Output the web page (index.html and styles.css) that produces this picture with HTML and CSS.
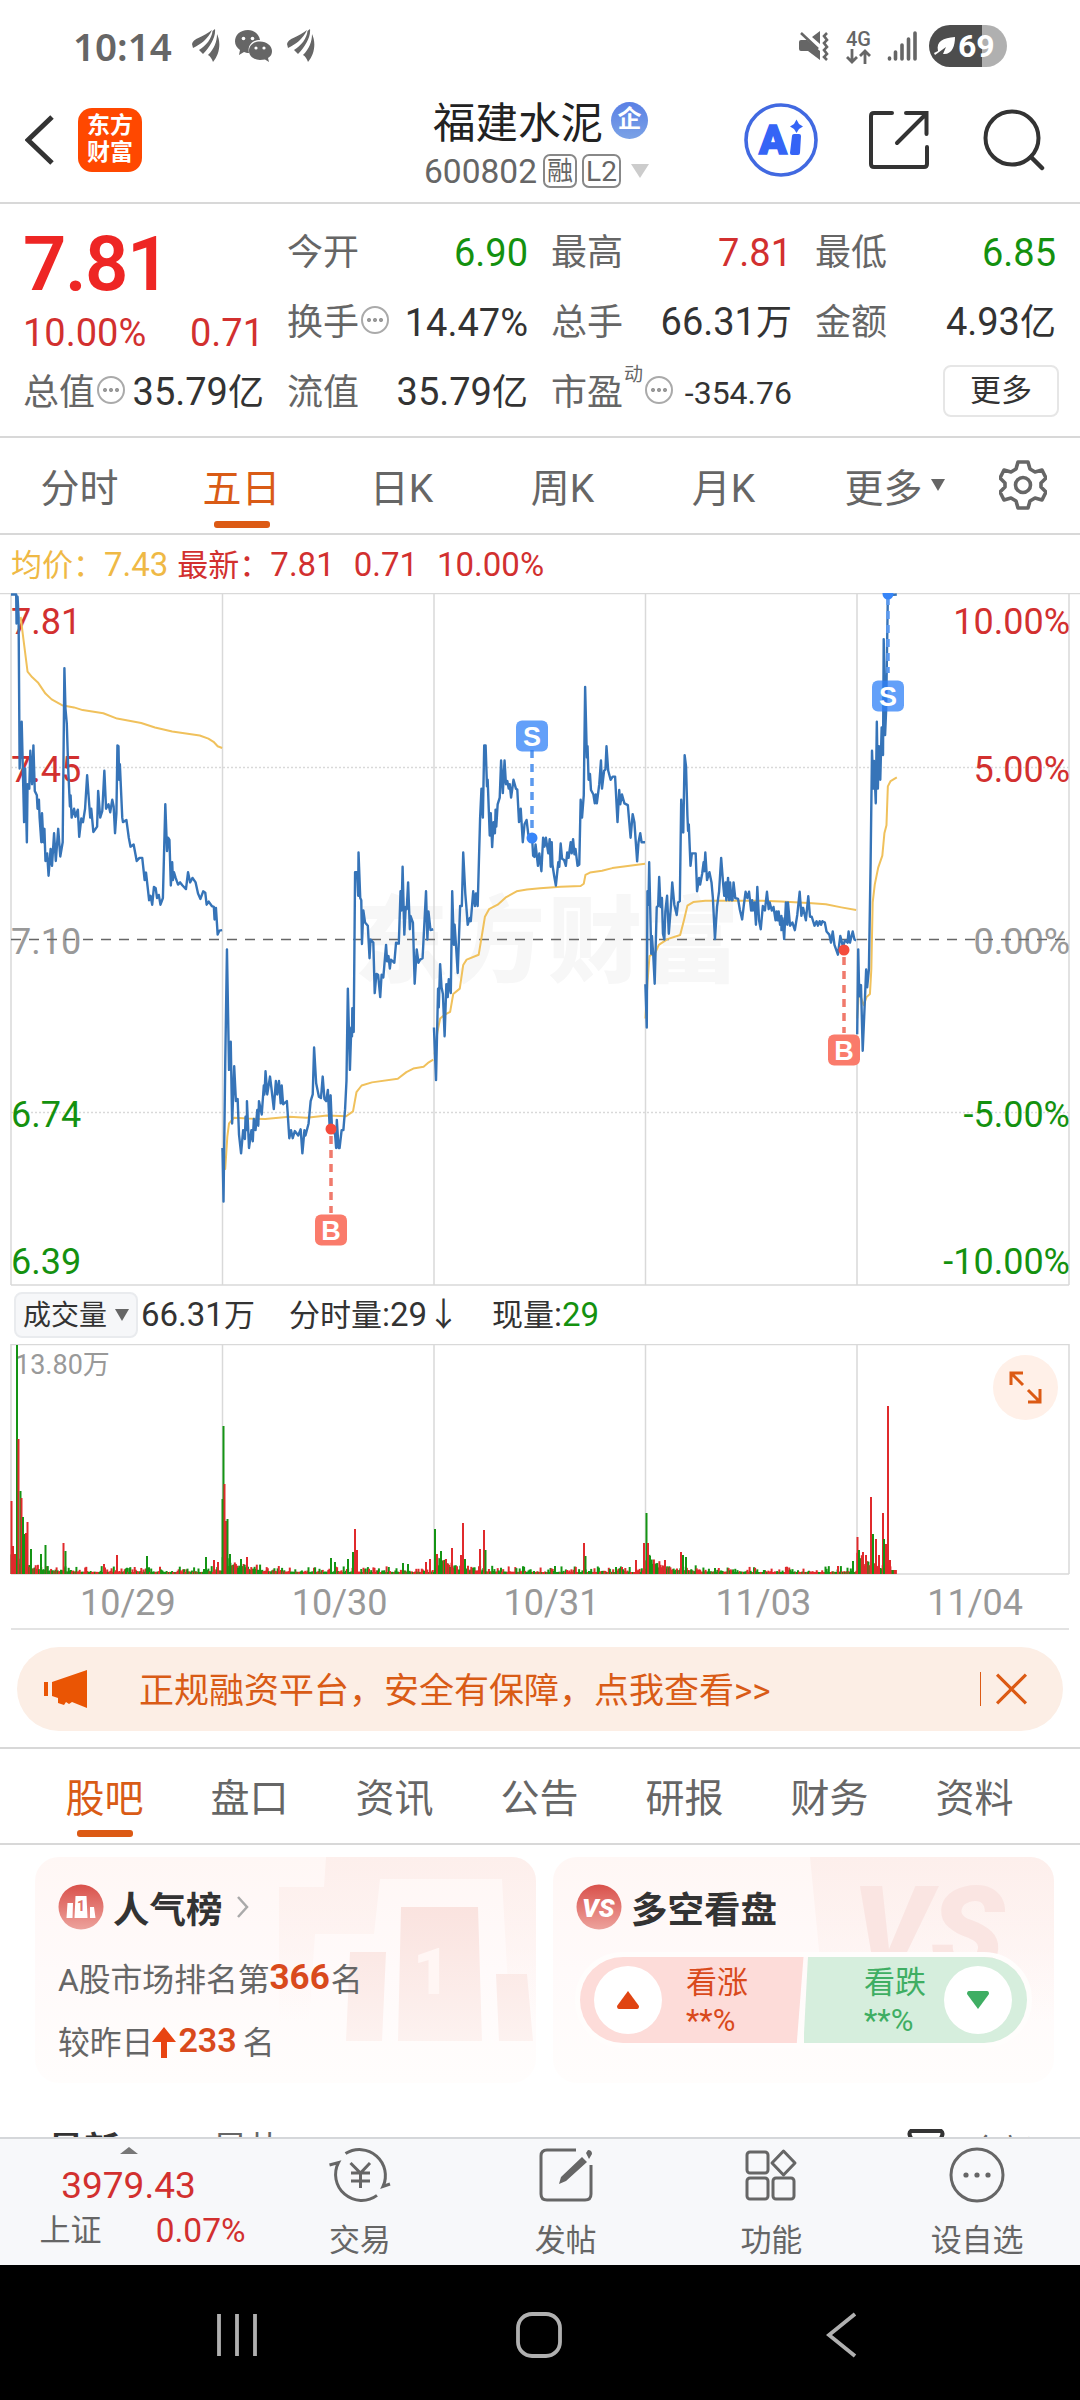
FILE: index.html
```html
<!DOCTYPE html>
<html lang="zh-CN">
<head>
  <meta charset="UTF-8">
  <meta name="viewport" content="width=device-width, initial-scale=1">
  <title>福建水泥 600802</title>
  <link rel="stylesheet" href="styles.css">
</head>
<body>
  <!-- Phone status bar -->
  <div class="status-bar">
    <div class="status-left">
      <span class="clock">10:14</span>
      <svg class="wing" width="28" height="34" viewBox="0 0 28 34"><path d="M0 15C1 9 12 8 20 1C16 10 9 15 1 19ZM7 21C14 17 20 9 20.500 2L23 0C24 8 18 18 11 25ZM25 5C29 13 28 25 21 33C20 30 18 27 16 26C22 20 25 13 25 5Z"/></svg>
      <svg class="wechat" width="37" height="32" viewBox="0 0 37 32"><path d="M13 0C5 0 0 5 0 11.500C0 15 2 18 5 20L4 25L9 22C10 22.500 12 23 14 23C12 15 18 10 25 10C24 4 19 0 13 0Z"/><path d="M25 11.500C18 11.500 14 16 14 21C14 26 19 30 25 30L30 29.500L34 32L33 28C36 26 37 24 37 21C37 16 32 11.500 25 11.500Z"/><g fill="#fff"><circle cx="8.500" cy="8.500" r="1.800"/><circle cx="17.500" cy="8.500" r="1.800"/><circle cx="21" cy="18" r="1.600"/><circle cx="29" cy="18" r="1.600"/></g></svg>
      <svg class="wing" width="28" height="34" viewBox="0 0 28 34"><path d="M0 15C1 9 12 8 20 1C16 10 9 15 1 19ZM7 21C14 17 20 9 20.500 2L23 0C24 8 18 18 11 25ZM25 5C29 13 28 25 21 33C20 30 18 27 16 26C22 20 25 13 25 5Z"/></svg>
    </div>
    <div class="status-right">
      <svg width="30" height="30" viewBox="0 0 30 30"><path d="M0 11Q0 9 2 9H8L21 20V29L9 20H2Q0 20 0 18ZM13 6L21 0V13Z"/><path d="M2 2L19 18M28 2L25 5L28 9L25 12L28 16L25 19L28 23L25 26L28 29" fill="none" stroke="#666" stroke-width="2.600"/></svg>
      <div class="net">
        <span>4G</span>
        <svg width="25" height="15" viewBox="0 0 25 15"><path d="M6 0V13M1 8L6 13L11 8M19 15V2M14 7L19 2L24 7" fill="none" stroke="#666" stroke-width="2.800"/></svg>
      </div>
      <svg width="30" height="30" viewBox="0 0 30 30"><path d="M2.500 27V28M8.500 21V28M15 14V28M21.500 8V28M28 2V28" fill="none" stroke="#666" stroke-width="3.600" stroke-linecap="round"/></svg>
      <div class="battery">
        <svg width="21" height="20" viewBox="0 0 21 20"><path d="M4 15C2 5 9 2 21 1C21 10 18 19 9 18L12 11L1 19L0 17Z" fill="#fff"/></svg>
        <span>69</span>
      </div>
    </div>
  </div>

  <header class="header">
    <div class="header-left">
      <svg width="30" height="52" viewBox="0 0 30 52"><path d="M27 3L3 26L27 49" fill="none" stroke="#333" stroke-width="5"/></svg>
      <div class="logo">东方<br>财富</div>
    </div>
    <div class="header-title">
      <div class="stock-name">福建水泥<span class="company">企</span></div>
      <div class="stock-code">600802<span class="tag">融</span><span class="tag tag-l2">L2</span><i class="down-light"></i></div>
    </div>
    <div class="header-right">
      <svg width="74" height="74" viewBox="0 0 74 74"><circle cx="37" cy="37" r="35" fill="none" stroke="#4169e1" stroke-width="3.600"/><text class="ai-text" x="15" y="51">A</text><path d="M50 33H55L54 50H48Z" fill="#3564f6" stroke="#3564f6" stroke-width="4" stroke-linejoin="round"/><path d="M52.500 16.500L55 21L59 23.500L55 26L52.500 30L50 26L46 23.500L50 21Z" fill="#3564f6"/></svg>
      <svg width="60" height="60" viewBox="0 0 60 60"><path d="M23 3H5Q2 3 2 6V54Q2 57 5 57H55Q58 57 58 54V37M37 3H57.500V24M57 4L28 33" fill="none" stroke="#333" stroke-width="4" stroke-linecap="round"/></svg>
      <svg width="62" height="62" viewBox="0 0 62 62"><circle cx="29" cy="29" r="26.500" fill="none" stroke="#333" stroke-width="4"/><path d="M48 48L59 59" stroke="#333" stroke-width="4.500" stroke-linecap="round"/></svg>
    </div>
  </header>

  <section class="quote">
    <div class="price">7.81</div>
    <div class="cell"><label>今开</label><b class="green">6.90</b></div>
    <div class="cell"><label>最高</label><b class="red">7.81</b></div>
    <div class="cell"><label>最低</label><b class="green">6.85</b></div>

    <div class="cell change red"><span>10.00%</span><span>0.71</span></div>
    <div class="cell"><label>换手<i class="info"></i></label><b>14.47%</b></div>
    <div class="cell"><label>总手</label><b>66.31<small>万</small></b></div>
    <div class="cell"><label>金额</label><b>4.93<small>亿</small></b></div>

    <div class="cell"><label>总值<i class="info"></i></label><b>35.79<small>亿</small></b></div>
    <div class="cell"><label>流值</label><b>35.79<small>亿</small></b></div>
    <div class="cell"><label>市盈<sup>动</sup><i class="info"></i></label><b class="pe">-354.76</b></div>
    <div class="cell cell-more"><button class="more-btn">更多</button></div>
  </section>

  <nav class="period-tabs">
    <a>分时</a>
    <a class="active">五日</a>
    <a>日K</a>
    <a>周K</a>
    <a>月K</a>
    <a class="more-tab">更多<i class="down-dark"></i></a>
    <svg width="48" height="50" viewBox="0 0 48 50"><path d="M19 2H29L31 9L36 12L43 10L47 18L42 23V27L47 32L43 40L36 38L31 41L29 48H19L17 41L12 38L5 40L1 32L6 27V23L1 18L5 10L12 12L17 9Z" fill="none" stroke="#666" stroke-width="3.600" stroke-linejoin="round"/><circle cx="24" cy="25" r="7.500" fill="none" stroke="#666" stroke-width="3.600"/></svg>
  </nav>

  <div class="average-line">
    <span class="yellow"><small>均价：</small>7.43</span>
    <span class="red"><small>最新：</small>7.81</span>
    <span class="red">0.71</span>
    <span class="red">10.00%</span>
  </div>

  <!-- Price chart -->
  <svg class="price-chart" width="1080" height="693" viewBox="0 0 1080 693">
    <text class="watermark" x="354" y="382">东方财富</text>
    <g class="frame">
      <path d="M0 .5H1080M11 692H1069" />
      <path d="M11 0V692M222.500 0V692M434 0V692M645.500 0V692M857 0V692M1069 0V692"/>
      <path class="dotted" d="M11 174.500H1069M11 519.500H1069"/>
    </g>
    <g class="labels">
      <text class="red-fill" x="11" y="41">7.81</text>
      <text class="red-fill" x="11" y="189">7.45</text>
      <text class="grey-fill" x="11" y="361">7.10</text>
      <text class="green-fill" x="11" y="534">6.74</text>
      <text class="green-fill" x="11" y="681">6.39</text>
    </g>
    <g class="labels labels-right">
      <text class="red-fill" x="1070" y="41">10.00%</text>
      <text class="red-fill" x="1070" y="189">5.00%</text>
      <text class="grey-fill" x="1070" y="361">0.00%</text>
      <text class="green-fill" x="1070" y="534">-5.00%</text>
      <text class="green-fill" x="1070" y="681">-10.00%</text>
    </g>
    <path class="zero-line" d="M11 346.500H1069"/>
    <g class="avg" transform="translate(0 -3) scale(.3444 .4464)">
      <polyline points="60,60 68,110 80,183 93,195 110,207 132,232 150,245 180,258 215,263 240,269 300,276 340,288 410,298 450,308 500,317 580,326 605,333 620,340 632,350 645,354"/>
      <polyline points="646,1250 654,1297 660,1225 665,1195 680,1182 720,1184 770,1185 840,1180 890,1182 950,1177 1005,1179 1025,1168 1035,1125 1050,1110 1080,1103 1155,1095 1180,1080 1200,1072 1230,1068 1245,1058 1258,1052"/>
      <polyline points="1262,1040 1270,990 1278,960 1290,952 1307,945 1316,905 1335,893 1345,840 1355,828 1390,817 1400,770 1408,732 1420,715 1445,705 1470,688 1500,675 1530,671 1568,668 1628,665 1686,663 1695,658 1700,638 1713,633 1748,629 1778,623 1873,613"/>
    </g>
    <g class="avg" transform="translate(540 -3) scale(.3444 .4464)">
      <polyline points="306,960 312,880 318,820 335,812 345,795 370,782 407,773 418,740 428,707 445,699 480,696 640,696 700,698 780,701 830,704 875,711 918,717"/>
      <polyline points="921,960 926,900 940,930 948,912 958,905 962,850 966,700 972,660 982,622 994,595 1000,545 1006,527 1010,440 1018,428 1036,420"/>
    </g>
    <g class="price-line" transform="translate(0 -3) scale(.3444 .4464)">
      <polyline points="32,10 47,10 48,75 51,15 54,60 57,400 63,295 70,520 73,400 78,565 80,435 85,445 88,360 93,435 97,348 101,450 107,460 109,490 113,470 115,510 120,565 122,500 126,565 129,535 132,607 137,590 141,640 147,580 151,618 157,545 162,607 169,535 175,597 182,565 187,175 190,265 194,300 198,400 203,485 205,460 208,510 215,490 219,508 226,492 230,553 236,512 241,520 247,490 253,415 259,480 262,510 265,490 271,542 282,530 285,450 291,510 297,495 303,405 308,490 315,480 320,498 326,470 330,485 334,545 338,500 341,348 344,350 346,425 348,390 355,510 357,520 367,515 374,555 379,575 388,570 397,607 405,600 413,600 420,650 424,633 433,695 437,685 442,705 447,665 452,668 456,690 461,683 466,705 473,690 480,480 485,585 488,555 492,560 496,662 500,610 502,650 505,632 510,645 517,660 523,655 530,662 540,670 546,632 552,655 559,645 568,655 575,680 582,692 590,675 596,678 600,705 606,698 615,708 621,710 623,738 627,712 632,772 637,763 645,762"/>
      <polyline points="646,1250 649,1370 654,1060 659,805 665,1075 670,1012 674,1195 680,1067 685,1145 690,1140 694,1220 700,1262 706,1210 711,1230 713,1180 717,1210 717,1145 723,1250 730,1210 734,1235 737,1185 742,1210 747,1165 750,1200 752,1145 760,1175 766,1110 768,1130 771,1078 776,1130 784,1090 788,1115 795,1163 801,1100 805,1130 810,1100 815,1150 818,1110 822,1152 833,1145 840,1228 845,1210 850,1228 856,1212 866,1222 873,1208 878,1262 884,1210 887,1222 896,1195 902,1145 908,1130 912,1025 918,1105 926,1135 932,1138 937,1090 942,1140 947,1145 952,1120 957,1200 960,1132 964,1208 973,1220 976,1250 978,1187 983,1250 986,1250 992,1210 997,1210 1002,1163 1006,1100 1010,893 1016,1075 1020,980 1022,1000 1023,937 1027,990 1031,632 1037,632 1040,685 1041,588 1046,690 1049,695 1051,793 1055,718 1060,745 1068,752 1073,825 1076,783 1084,790 1088,903 1093,860 1098,862 1104,912 1108,862 1113,868 1121,795 1124,832 1128,820 1132,848 1135,828 1145,835 1150,790 1158,792 1163,675 1166,718 1169,620 1174,772 1178,710 1181,715 1185,655 1190,760 1192,730 1199,745 1204,882 1210,805 1215,835 1220,828 1227,825 1237,675 1241,783 1244,720 1250,762 1258,760"/>
      <polyline points="1260,980 1266,1098 1272,893 1274,935 1278,838 1282,890 1286,905 1291,1000 1296,883 1300,912 1303,872 1309,903 1313,675 1318,795 1320,750 1324,795 1329,858 1336,708 1341,708 1345,588 1351,680 1354,708 1358,750 1364,735 1367,742 1374,675 1379,708 1382,680 1387,708 1394,512 1398,445 1402,510 1406,348 1410,348 1414,440 1416,425 1422,550 1425,500 1429,576 1433,520 1437,545 1439,492 1441,530 1445,480 1451,465 1455,382 1460,455 1465,382 1469,435 1473,428 1477,445 1480,435 1484,465 1491,425 1498,445 1502,447 1507,520 1512,490 1518,565 1523,525 1529,515 1534,548 1545,555 1548,595 1552,598 1555,570 1562,618 1566,590 1572,630 1577,555 1581,575 1585,555 1592,590 1596,558 1599,620 1602,565 1604,615 1609,640 1614,662 1621,610 1624,620 1628,568 1632,602 1638,605 1643,618 1647,588 1651,600 1657,565 1660,590 1664,558 1668,592 1671,580 1677,618 1682,615 1686,470 1690,510 1695,460 1699,217 1704,375 1706,350 1709,425 1713,412 1716,448 1723,458 1727,478 1730,458 1733,478 1740,435 1745,382 1748,445 1754,405 1758,402 1761,350 1766,405 1773,425 1779,418 1786,418 1793,520 1798,448 1801,480 1806,458 1813,478 1823,482 1831,555 1837,502 1842,520 1850,608 1854,565 1859,545 1863,565 1873,565"/>
    </g>
    <g class="price-line" transform="translate(540 -3) scale(.3444 .4464)">
      <polyline points="306,883 310,980 312,675 315,705 317,610 323,815 325,775 329,820 333,882 339,710 343,708 346,643 350,710 354,690 357,770 361,783 364,720 369,685 374,770 380,710 384,655 390,705 397,728 401,700 406,697 410,470 413,540 416,543 420,370 424,395 428,505 430,540 432,525 437,618 441,590 452,590 456,675 462,645 465,660 471,635 475,610 477,630 480,588 485,650 492,632 498,655 502,690 508,782 514,710 520,675 526,600 532,660 535,685 539,655 541,695 546,645 549,695 552,655 556,695 559,695 562,655 567,690 575,692 580,715 587,738 592,705 597,676 602,690 607,676 613,718 616,695 618,718 623,700 627,750 631,665 636,740 641,760 647,708 653,718 659,676 664,715 667,700 673,718 678,710 684,740 687,720 690,740 693,720 697,750 701,730 701,762 704,735 709,782 714,700 718,750 720,700 726,752 733,745 740,762 747,728 754,676 759,730 764,712 772,740 779,686 784,732 789,732 797,752 803,742 807,752 812,742 816,750 820,742 827,745 832,765 840,772 845,790 850,765 855,795 865,817 872,775 880,800 885,785 893,790 896,765 900,790 908,765 913,783 918,785"/>
      <polyline points="921,995 924,805 927,910 932,885 937,1032 943,925 947,850 950,890 955,850 960,610 964,360 968,445 970,383 975,478 978,295 981,445 984,350 988,425 992,308 996,370 998,110 1002,325 1005,270 1010,12 1036,10"/>
    </g>
    <g class="mark sell">
      <path d="M532 157V243M888 4V80"/>
      <circle cx="532" cy="245" r="5.500"/><circle cx="888" cy="1" r="5.500"/>
      <rect x="516" y="127.500" width="32" height="31" rx="6"/><rect x="872" y="87.500" width="32" height="31" rx="6"/>
      <text x="532" y="153">S</text><text x="888" y="113">S</text>
    </g>
    <g class="mark buy">
      <path d="M331 543V620M844 364V440"/>
      <circle cx="331" cy="536" r="5.500"/><circle cx="844" cy="357" r="5.500"/>
      <rect x="315" y="621.500" width="32" height="31" rx="6"/><rect x="828" y="441.500" width="32" height="31" rx="6"/>
      <text x="331" y="647">B</text><text x="844" y="467">B</text>
    </g>
  </svg>

  <div class="volume-legend">
    <span class="volume-select">成交量<i class="down-dark"></i></span>
    <span class="volume-total">66.31<small>万</small></span>
    <span class="minute-volume"><small>分时量</small>:29↓</span>
    <span><small>现量</small>:<span class="green">29</span></span>
  </div>

  <!-- Volume chart, bars are added by the script -->
  <svg class="volume-chart" width="1080" height="231" viewBox="0 0 1080 231">
    <g class="frame">
      <path d="M11 .5H1069M11 230H1069M11 0V230M222.500 0V230M434 0V230M645.500 0V230M857 0V230M1069 0V230"/>
    </g>
    <text class="volume-max" x="15" y="30">13.80万</text>
    <g id="bars"></g>
    <circle cx="1025.500" cy="43.500" r="32.500" fill="#fff0e8"/>
    <path d="M1011 41V29H1023M1011 29L1023 41M1040 45V58H1028M1040 58L1028 46" fill="none" stroke="#dc5a14" stroke-width="3"/>
  </svg>
  <div class="dates">
    <span>10/29</span><span>10/30</span><span>10/31</span><span>11/03</span><span>11/04</span>
  </div>

  <div class="banner">
    <svg width="44" height="38" viewBox="0 0 44 38"><path d="M0 12H4V26H0ZM8 12L43 0V38L28 32L25 34L22 32L20 35L14 33V28L8 26Z" fill="#ea5504"/></svg>
    <p>正规融资平台，安全有保障，点我查看&gt;&gt;</p>
    <svg class="close" width="32" height="32" viewBox="0 0 32 32"><path d="M2 2L30 30M30 2L2 30" stroke="#dc5a14" stroke-width="3"/></svg>
  </div>

  <nav class="info-tabs">
    <a class="active">股吧</a><a>盘口</a><a>资讯</a><a>公告</a><a>研报</a><a>财务</a><a>资料</a>
  </nav>

  <main class="cards">
    <section class="card">
      <svg class="card-art" width="260" height="190" viewBox="0 0 260 190">
        <defs>
          <linearGradient id="artFade" x1="0" y1="0" x2="0" y2="1"><stop offset="0" stop-color="#fdefec"/><stop offset="1" stop-color="#fdefec" stop-opacity="0"/></linearGradient>
          <linearGradient id="barFade" x1="0" y1="0" x2="0" y2="1"><stop offset="0" stop-color="#fae3df"/><stop offset="1" stop-color="#fdf2f0"/></linearGradient>
        </defs>
        <path d="M3 30H48L50 0H260V165H234L226 22H104L98 77H39L33 165H3Z" fill="url(#artFade)"/>
        <path d="M125 50H202L206 184H122ZM74 95H110L106 184H70ZM220 117H251L257 184H223Z" fill="url(#barFade)"/>
        <text x="137" y="137" class="art-one">1</text>
      </svg>
      <h2>
        <svg width="46" height="46" viewBox="0 0 46 46"><defs><linearGradient id="redFade" x1="0" y1="0" x2="0" y2="1"><stop offset="0" stop-color="#d9514b"/><stop offset="1" stop-color="#eda29c"/></linearGradient></defs><circle cx="23" cy="23" r="22.500" fill="url(#redFade)"/><path d="M9.500 19H15L14.500 34H8.500ZM17.500 12H28.500L29.500 34H16.500ZM32 23H36L37.500 34H32Z" fill="#fff"/><text class="tiny-one" x="19" y="27">1</text></svg>
        <span>人气榜</span>
        <svg class="chevron" width="14" height="24" viewBox="0 0 14 24"><path d="M2 2L11 12L2 22" fill="none" stroke="#aaa" stroke-width="2.500"/></svg>
      </h2>
      <p>A股市场排名第<strong>366</strong>名</p>
      <p>较昨日<svg class="rise" width="24" height="32" viewBox="0 0 24 32"><path d="M12 0L24 15H15V31H9V15H0Z"/></svg><strong class="rise-value">233</strong><span class="unit">名</span></p>
    </section>
    <section class="card">
      <svg class="card-art" width="260" height="190" viewBox="0 0 260 190">
        <path d="M16 0H260V165H32Z" fill="url(#artFade)"/>
        <text x="58" y="116" class="art-vs">VS</text>
      </svg>
      <h2 class="vs-title">
        <svg width="46" height="46" viewBox="0 0 46 46"><circle cx="23" cy="23" r="22.500" fill="url(#redFade)"/><text class="vs-text" x="6" y="33">VS</text></svg>
        <span>多空看盘</span>
      </h2>
      <div class="vote">
        <div class="vote-up"><i><svg width="22" height="18" viewBox="0 0 22 18"><path d="M11 0L22 15Q22 18 20 18H2Q0 18 0 15Z" fill="#e04412"/></svg></i><span>看涨<br>**%</span></div>
        <div class="vote-down"><span>看跌<br>**%</span><i><svg width="22" height="18" viewBox="0 0 22 18"><path d="M11 18L22 3Q22 0 20 0H2Q0 0 0 3Z" fill="#3fae63"/></svg></i></div>
      </div>
    </section>
  </main>

  <div class="post-filter">
    <strong>最新</strong>
    <span>最热</span>
    <svg width="38" height="34" viewBox="0 0 38 34"><path d="M4 2H34Q37 4 34 9L24 18V32L14 26V18L4 9Q1 4 4 2Z" fill="none" stroke="#333" stroke-width="4"/></svg>
    <em>全部</em>
  </div>

  <footer class="bottom-bar">
    <div class="index">
      <i class="up-grey"></i>
      <div class="index-value">3979.43</div>
      <div class="index-row"><span>上证</span><span class="red">0.07%</span></div>
    </div>
    <a>
      <svg width="62" height="56" viewBox="0 0 62 56"><path d="M16.500 6.600A26 26 0 0 1 54 39.500L61 37M48 48.400A26 26 0 0 1 9.500 15.500L.5 18M54 39.500L56 34M21.500 16L31.500 26L41 16M31.500 26V41M22 26H41M22 34H41"/></svg>
      <span>交易</span>
    </a>
    <a>
      <svg width="56" height="56" viewBox="0 0 56 56"><path d="M38 3H9Q3 3 3 9V47Q3 53 9 53H47Q53 53 53 47V18"/><path class="solid" d="M44 10L49 15L28 34L21 37L23 30ZM48 6L50 3Q54 3 54 7L51 12Z"/></svg>
      <span>发帖</span>
    </a>
    <a>
      <svg width="56" height="56" viewBox="0 0 56 56"><rect x="4" y="5" width="21" height="21" rx="3"/><rect x="4" y="31" width="21" height="21" rx="3"/><rect x="30" y="31" width="21" height="21" rx="3"/><path d="M40.500 4L52 16L40.500 28L29 16Z" stroke-linejoin="round"/></svg>
      <span>功能</span>
    </a>
    <a>
      <svg width="56" height="56" viewBox="0 0 56 56"><circle cx="28" cy="28" r="26"/><g class="solid"><circle cx="17" cy="28" r="2.600"/><circle cx="28" cy="28" r="2.600"/><circle cx="39" cy="28" r="2.600"/></g></svg>
      <span>设自选</span>
    </a>
  </footer>

  <div class="system-nav">
    <svg width="44" height="44" viewBox="0 0 44 44"><path d="M4 1V43M22 1V43M40 1V43"/></svg>
    <svg width="48" height="48" viewBox="0 0 48 48"><rect x="3" y="3" width="42" height="42" rx="14"/></svg>
    <svg width="32" height="48" viewBox="0 0 32 48"><path d="M29 3L3 24L29 45"/></svg>
  </div>

  <script src="script.js"></script>
</body>
</html>
```
FILE: styles.css
```css
body {
  margin: 0;
  width: 1080px;
  height: 2400px;
  overflow: hidden;
  background-color: #fff;
  color: #333;
  font-family: Roboto, "Noto Sans CJK SC", sans-serif;
}

* {
  box-sizing: border-box;
}

svg {
  display: block;
  flex: none;
}

i, em {
  font-style: normal;
}

.red {
  color: #d2302f;
}

.green {
  color: #14910f;
}

.yellow {
  color: #efb945;
}

/* small triangles */
.down-light, .down-dark, .up-grey {
  display: inline-block;
  border: 9px solid transparent;
  border-top: 14px solid #ccc;
  border-bottom: 0;
}

.down-dark {
  border-width: 12px 7px 0;
  border-top-color: #666;
}

.up-grey {
  border-width: 0 9px 7px;
  border-bottom: 7px solid #777;
}

/* status bar */
.status-bar {
  display: flex;
  justify-content: space-between;
  height: 92px;
  padding: 0 73px 0 73px;
  fill: #666;
  color: #666;
}

.status-left, .status-right {
  display: flex;
  align-items: center;
}

.clock {
  font: 600 38.500px/50px "Noto Sans", sans-serif;
  width: 119px;
}

.wing {
  margin-right: 15px;
}

.wechat {
  margin-right: 15px;
}

.net {
  width: 25px;
  margin: 0 16px 0 17px;
  font-size: 20px;
  line-height: 20px;
  font-weight: 500;
}

.battery {
  display: flex;
  align-items: center;
  width: 78px;
  height: 42px;
  margin-left: 12px;
  padding-left: 5px;
  border-radius: 21px;
  background: linear-gradient(90deg, #4d4d4d 53px, #b0b0b0 53px);
  color: #fff;
  font-size: 32px;
  font-weight: 700;
  line-height: 42px;
}

.battery svg {
  margin-right: 3px;
}

/* title bar */
.header {
  display: grid;
  grid-template-columns: 400px 1fr 400px;
  height: 112px;
  border-bottom: 2px solid #d8d8d8;
}

.header-left, .header-right {
  display: flex;
  align-items: center;
  height: 96px;
}

.header-left {
  padding-left: 25px;
  gap: 23px;
}

.header-right {
  padding-left: 64px;
  gap: 51px;
}

.header-right svg:last-child {
  margin-left: 3px;
}

.logo {
  width: 64px;
  height: 64px;
  padding-top: 4px;
  border-radius: 14px;
  background-color: #ff4800;
  color: #fff;
  font-size: 23px;
  line-height: 27px;
  font-weight: 700;
  text-align: center;
}

.header-title {
  padding: 4px 0 0 25px;
  white-space: nowrap;
}

.stock-name {
  display: flex;
  align-items: center;
  padding-left: 8px;
  height: 46px;
  font-size: 42.500px;
  color: #222;
}

.company {
  width: 37px;
  height: 37px;
  margin: 2px 0 0 8px;
  border-radius: 50%;
  background: linear-gradient(#5a80e5, #7ba2e6);
  color: #fff;
  font-size: 24px;
  line-height: 34px;
  font-weight: 700;
  text-align: center;
}

.stock-code {
  display: flex;
  align-items: center;
  height: 58px;
  margin-left: -1px;
  color: #666;
  font-size: 33.500px;
}

.tag {
  width: 34px;
  height: 34px;
  margin-left: 6px;
  border: 2px solid #888;
  border-radius: 7px;
  font-size: 26px;
  line-height: 30px;
  text-align: center;
}

.tag-l2 {
  width: 39px;
  margin-left: 5px;
  font-size: 28px;
  line-height: 31px;
}

.stock-code .down-light {
  margin-left: 10px;
}

.ai-text {
  font: 900 41px Roboto, sans-serif;
  fill: #3564f6;
  stroke: #3564f6;
  stroke-width: 1.500;
}

/* quote numbers */
.quote {
  display: grid;
  grid-template-columns: repeat(4, 241px);
  grid-template-rows: repeat(3, 70px);
  column-gap: 23px;
  height: 234px;
  padding: 13px 23px;
  border-bottom: 2px solid #d8d8d8;
}

.cell {
  display: flex;
  justify-content: space-between;
  align-items: center;
  line-height: 70px;
  font-size: 38px;
  white-space: nowrap;
}

.cell label {
  display: flex;
  align-items: center;
  padding-top: 1px;
  color: #666;
  font-size: 36px;
}

.cell b {
  font-weight: 400;
  padding-top: 1px;
}

.cell small {
  font-size: 36px;
}

.price {
  padding-top: 12px;
  font-size: 76px;
  font-weight: 600;
  letter-spacing: -1.500px;
  line-height: 70px;
  color: #ee2624;
}

.change {
  padding-top: 22px;
}

.cell sup {
  font-size: 19px;
  line-height: 20px;
  align-self: flex-start;
  padding-top: 7px;
  margin-left: 1px;
}

.info {
  width: 28px;
  height: 28px;
  margin: -6px 0 0 2px;
  border: 2px solid #aaa;
  border-radius: 50%;
  background: radial-gradient(circle at 6px 12px, #999 1.800px, transparent 2.300px), radial-gradient(circle at 12px 12px, #999 1.800px, transparent 2.300px), radial-gradient(circle at 18px 12px, #999 1.800px, transparent 2.300px);
}

.cell .pe {
  padding-top: 2px;
  font-size: 32px;
}

.cell-more {
  justify-content: flex-end;
}

.more-btn {
  width: 116px;
  height: 52px;
  margin: -3px -3px 0 0;
  padding: 0;
  border: 2px solid #e6e6e6;
  border-radius: 8px;
  background-color: #fff;
  color: #333;
  font: 31px/46px Roboto, "Noto Sans CJK SC", sans-serif;
}

/* tabs */
.period-tabs {
  display: flex;
  align-items: center;
  height: 97px;
  border-bottom: 2px solid #d8d8d8;
}

.period-tabs a {
  width: 161px;
}

.period-tabs a:not(.active) {
  margin-left: -1px;
  margin-right: 1px;
}

.period-tabs a, .info-tabs a {
  height: 95px;
  padding-top: 4px;
  color: #666;
  font-size: 39px;
  line-height: 95px;
  text-align: center;
}

.period-tabs svg {
  margin: -1px 0 0 33px;
}

.period-tabs .more-tab {
  padding-left: 20px;
  white-space: nowrap;
}

.more-tab .down-dark {
  margin: 0 0 11px 8px;
}

.period-tabs .active, .info-tabs .active {
  color: #d95b16;
}

.active::after {
  content: "";
  display: block;
  width: 56px;
  height: 7px;
  margin: -16px auto 0;
  border-radius: 3px;
  background-color: #dc5a14;
}

.info-tabs .active::after {
  margin-top: -17px;
}

.average-line {
  display: flex;
  height: 58px;
  padding-left: 11px;
  font-size: 33px;
  line-height: 59px;
}

.average-line small {
  font-size: 31px;
}

.average-line span {
  margin-right: 19px;
}

.average-line .yellow {
  margin-right: 9px;
}

/* charts */
.frame path {
  fill: none;
  stroke: #d9d9d9;
  stroke-width: 1.500;
}

.frame .dotted {
  stroke-dasharray: 2 2;
}

.labels text {
  font-size: 36px;
}

.labels-right {
  text-anchor: end;
}

.red-fill {
  fill: #d2302f;
}

.green-fill {
  fill: #14910f;
}

.grey-fill {
  fill: #999;
}

.watermark {
  font-size: 94px;
  font-weight: 900;
  letter-spacing: 3px;
  fill: #f7f7f7;
}

.zero-line {
  stroke: #666;
  stroke-width: 1.500;
  stroke-dasharray: 10 8;
}

.avg polyline, .price-line polyline {
  fill: none;
  stroke: #f0c15c;
  stroke-width: 2;
  stroke-linejoin: round;
  vector-effect: non-scaling-stroke;
}

.price-line polyline {
  stroke: #3674b8;
  stroke-width: 2.400;
}

.mark path {
  stroke-width: 3.500;
  stroke-dasharray: 8 6;
}

.mark text {
  fill: #fff;
  font: 700 27px "Liberation Sans", sans-serif;
  text-anchor: middle;
}

.sell {
  fill: #3785f8;
}

.sell path {
  stroke: #5b99ee;
}

.sell rect {
  fill: #2f80f7;
  fill-opacity: .75;
}

.buy {
  fill: #f44b3c;
}

.buy path {
  stroke: #f07a6c;
}

.buy rect {
  fill: #fa7b6b;
}

.volume-legend {
  display: flex;
  align-items: center;
  height: 58px;
  padding-left: 14px;
  font-size: 33px;
  line-height: 57px;
}

.volume-legend small {
  font-size: 31px;
}

.volume-select {
  width: 124px;
  height: 46px;
  padding-left: 7px;
  border: 2px solid #e9ebee;
  border-radius: 8px;
  background-color: #f6f7f9;
  font-size: 28px;
  line-height: 43px;
  white-space: nowrap;
}

.volume-select .down-dark {
  margin: 0 0 4px 8px;
}

.volume-total {
  margin: 0 34px 0 3px;
}

.minute-volume {
  margin-right: 32px;
}

.volume-max {
  font-size: 27px;
  fill: #999;
}

.bar-up {
  stroke: #e02a2c;
}

.bar-down {
  stroke: #149414;
}

.dates {
  display: flex;
  height: 55px;
  margin: 0 11px;
  padding-left: 11px;
  border-bottom: 2px solid #e3e3e3;
  color: #999;
  font-size: 36px;
  line-height: 56px;
}

.dates span {
  flex: none;
  width: 211.800px;
  text-align: center;
}

/* banner */
.banner {
  display: flex;
  align-items: center;
  height: 84px;
  margin: 17px 17px 16px 17px;
  padding: 0 35px 0 27px;
  border-radius: 42px;
  background-color: #fceee5;
  color: #d95b16;
}

.banner p {
  flex: 1;
  margin: -4px 0 0 51px;
  font-size: 35px;
}

.banner .close {
  width: 48px;
  height: 34px;
  padding-left: 14px;
  border-left: 1.500px solid #dc5a14;
}

.info-tabs {
  display: flex;
  height: 98px;
  padding: 0 32px;
  border-top: 2px solid #d8d8d8;
  border-bottom: 2px solid #d8d8d8;
}

.info-tabs a {
  width: 145px;
  padding-top: 3px;
}

/* cards */
.cards {
  display: grid;
  grid-template-columns: 501px 501px;
  gap: 17px;
  padding: 12px 35px 0;
}

.card {
  position: relative;
  height: 226px;
  padding: 27px 23px 0;
  border-radius: 24px;
  background: linear-gradient(#fff7f5, #fffafa 50%, #fffdfc);
  overflow: hidden;
}

.card > * {
  position: relative;
}

.card .card-art {
  position: absolute;
  right: 0;
  top: 0;
}

.art-one {
  font: 900 64px Roboto, sans-serif;
  fill: #fff6f4;
}

.art-vs {
  font: italic 900 122px Roboto, sans-serif;
  fill: #fae5e2;
}

.card h2 {
  display: flex;
  align-items: center;
  height: 46px;
  margin: 0 0 15px;
  font-size: 36.500px;
  line-height: 46px;
  font-weight: 600;
}

.card h2 span {
  margin: 7px 0 0 9px;
}

.tiny-one {
  font: 700 14px Roboto, sans-serif;
  fill: #e0706a;
}

.vs-text {
  font: italic 900 26px Roboto, sans-serif;
  fill: #fff;
}

.chevron {
  margin-left: 13px;
}

.card p {
  display: flex;
  align-items: center;
  height: 63px;
  margin: 0;
  color: #666;
  font-size: 31.800px;
}

.card strong {
  margin: 1px 1px 0 0;
  color: #d94a1c;
  font-size: 35px;
}

.card .rise-value {
  font-size: 34px;
  font-weight: 600;
}

.rise {
  margin: 6px 2px 0 -1px;
  fill: #e84412;
}

.unit {
  margin-left: 5px;
}

.vote {
  display: flex;
  width: 457px;
  height: 96px;
  margin: 22px 0 0 -1px;
  border: 5px solid #fffdfc;
  border-radius: 48px;
  font-size: 31px;
  line-height: 38px;
  overflow: hidden;
}

.vote div {
  display: flex;
  align-items: center;
  width: 225px;
  height: 86px;
}

.vote span {
  padding-top: 4px;
}

.vote i {
  display: flex;
  align-items: center;
  justify-content: center;
  width: 68px;
  height: 68px;
  border-radius: 50%;
  background-color: #fff;
}

.vote .vote-up {
  padding-left: 14px;
  gap: 24px;
  background-color: #fddcd9;
  color: #d94a1c;
  clip-path: polygon(0 0, 100% 0, 97% 100%, 0 100%);
}

.vote .vote-down {
  justify-content: flex-end;
  padding-right: 15px;
  gap: 18px;
  background-color: #d6eedd;
  color: #3fae63;
  clip-path: polygon(2% 0, 100% 0, 100% 100%, 0 100%);
}

.post-filter {
  display: flex;
  align-items: flex-start;
  height: 54px;
  padding: 46px 48px 0 50px;
  font-size: 36px;
  line-height: 44px;
  overflow: hidden;
}

.post-filter strong {
  margin-left: -2px;
}

.post-filter span {
  flex: 1;
  margin-left: 92px;
  color: #666;
}

.post-filter em {
  margin-left: 25px;
  color: #666;
  font-size: 31px;
}

/* bottom bar */
.bottom-bar {
  display: grid;
  grid-template-columns: 257px repeat(4, 1fr);
  height: 128px;
  border-top: 2px solid #d5d7da;
  background-color: #f7f8fa;
  color: #666;
  font-size: 31px;
}

.bottom-bar a {
  display: flex;
  flex-direction: column;
  align-items: center;
  padding-top: 8px;
  line-height: 75px;
}

.bottom-bar svg {
  fill: none;
  stroke: #666;
  stroke-width: 3;
}

.bottom-bar .solid {
  fill: #666;
  stroke: none;
}

.index {
  display: flex;
  flex-direction: column;
  align-items: center;
  padding-top: 8px;
}

.index-value {
  padding-top: 6px;
  color: #d2302f;
  font-size: 37px;
  line-height: 52px;
}

.index-row {
  display: flex;
  justify-content: space-between;
  width: 206px;
  margin: -4px 0 0 28px;
  line-height: 46px;
}

.index-row .red {
  font-size: 33.500px;
}

.system-nav {
  display: grid;
  grid-template-columns: 474px 130px 476px;
  align-items: center;
  justify-items: center;
  height: 135px;
  padding-top: 4px;
  background-color: #000;
}

.system-nav svg {
  fill: none;
  stroke: #b0b0b0;
  stroke-width: 3.800;
}
```
FILE: script.js
```js
// volume spikes: x, height, direction
const spikes = [
  [11.5, 73, 1], [13, 28, 1], [15, 20, 1], [17, 229, 0], [18.5, 135, 1], [20.5, 83, 0], [21.5, 76, 1], [23, 57, 0], [25, 40, 0],
  [26, 41, 1], [27.5, 52, 1], [31, 25, 0], [41, 20, 0], [45.5, 29, 0], [63.5, 31, 1], [65.5, 23, 0], [104, 10, 1],
  [117, 19, 1], [147, 18, 0], [206, 17, 0], [214, 14, 1], [218, 12, 1], [222.5, 75, 0], [223.5, 148, 0], [224.5, 90, 1],
  [226, 53, 1], [227.5, 55, 0], [230, 20, 0], [241, 15, 0], [247, 17, 1], [331, 16, 0], [335, 12, 0], [348, 15, 0], [353, 22, 0],
  [355, 45, 1], [357, 24, 1], [403, 11, 0], [408, 10, 0], [426, 12, 1], [430, 15, 1], [435, 45, 0], [437, 20, 1],
  [441, 23, 0], [446, 15, 1], [452, 26, 1], [461, 19, 1], [463, 51, 1], [465, 15, 0], [480, 25, 1], [484, 44, 1], [485.5, 24, 0],
  [555, 8, 0], [584, 31, 1], [585.5, 18, 0], [616, 7, 0], [636, 14, 1], [644, 31, 1], [646.5, 61, 0], [648, 31, 1],
  [650, 18, 0], [665, 14, 1], [681, 22, 1], [683, 19, 0], [686, 17, 0], [715, 6, 0], [838, 8, 1], [853, 13, 0], [857.5, 37, 1],
  [859, 24, 0], [863, 22, 1], [866, 19, 1], [871, 77, 1], [873, 40, 0], [876, 35, 1], [879, 19, 1], [883, 61, 1],
  [884, 35, 0], [886, 30, 1], [888, 168, 1], [890, 14, 1]
];
const starts = [11, 222.5, 434, 645.5, 857];
const group = document.getElementById('bars');

function addBar(x, height, up) {
  const line = document.createElementNS('http://www.w3.org/2000/svg', 'line');
  line.setAttribute('x1', x);
  line.setAttribute('x2', x);
  line.setAttribute('y1', 230);
  line.setAttribute('y2', 230 - height);
  line.setAttribute('class', up ? 'bar-up' : 'bar-down');
  line.setAttribute('stroke-width', 2);
  group.appendChild(line);
}

// small bars between the spikes, higher right after each open
let seed = 7;
function random() {
  seed = (seed * 16807) % 2147483647;
  return seed / 2147483647;
}

for (let x = 11.5; x < 897; x += 1.1) {
  const open = starts.filter(s => s <= x).pop();
  const height = 2 + Math.pow(random(), 4) * 6 + 19 * Math.exp(-(x - open) / 17) * (0.4 + random() * 0.6);
  addBar(x, x > 891 ? 4 : height, random() > 0.5);
}

spikes.forEach(([x, height, up]) => addBar(x, height, up));
```
